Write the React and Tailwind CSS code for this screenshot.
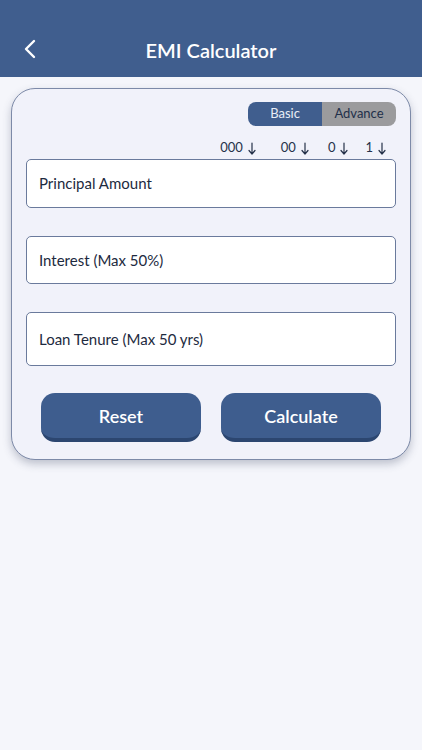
import React from "react";

function Arrow() {
  return (
    <svg width="8" height="13" viewBox="0 0 8 13" fill="none" className="ml-[5px]">
      <path d="M4 1 V12 M1 8.5 L4 12 L7 8.5" stroke="#26324a" strokeWidth="1.2" strokeLinecap="round" strokeLinejoin="round" />
    </svg>
  );
}

export default function App() {
  const font = { fontFamily: "Lato, 'Noto Sans', sans-serif" };
  return (
    <div className="w-[422px] h-[750px] bg-[#f5f6fb] overflow-hidden" style={font}>
      <header className="h-[77px] bg-[#405e8e] relative flex items-end">
        <div className="w-full h-[52px] flex items-center relative">
          <button className="absolute left-[20px] top-[12px] w-[20px] h-[24px] flex items-center justify-center">
            <svg width="14" height="20" viewBox="0 0 14 20" fill="none">
              <path d="M11 2 L3 10 L11 18" stroke="white" strokeWidth="2.4" strokeLinecap="round" strokeLinejoin="round" />
            </svg>
          </button>
          <h1 className="w-full text-center text-white text-[20px] font-semibold -mt-[3px]">EMI Calculator</h1>
        </div>
      </header>
      <div className="px-[11px] pt-[11px]">
        <div className="bg-[#f1f2fa] border border-[#7d8aa8] rounded-[24px] shadow-[0_4px_8px_rgba(60,70,100,0.3)] pt-[13px] pb-[17px] px-[14px]">
          <div className="flex justify-end">
            <div className="flex h-[24px] rounded-[8px] overflow-hidden text-[13px]">
              <div className="w-[74px] bg-[#405e8e] text-[#e8edf7] flex items-center justify-center">Basic</div>
              <div className="w-[74px] bg-[#9b9b9d] text-[#22304a] flex items-center justify-center">Advance</div>
            </div>
          </div>
          <div className="flex justify-end text-[13px] text-[#26324a] mt-[12px] h-[20px] items-center pr-[10px]">
            <span className="mr-[25px] flex items-center">000<Arrow /></span>
            <span className="mr-[19px] flex items-center">00<Arrow /></span>
            <span className="mr-[17px] flex items-center">0<Arrow /></span>
            <span className="flex items-center">1<Arrow /></span>
          </div>
          <div className="mt-[1px] flex flex-col gap-[28px]">
            <div className="h-[49px] bg-white border border-[#6a7a9c] rounded-[5px] flex items-center px-[12px] text-[15px] text-[#1d2a40]">Principal Amount</div>
            <div className="h-[48px] bg-white border border-[#6a7a9c] rounded-[5px] flex items-center px-[12px] text-[15px] text-[#1d2a40]">Interest (Max 50%)</div>
            <div className="h-[54px] bg-white border border-[#6a7a9c] rounded-[5px] flex items-center px-[12px] text-[15px] text-[#1d2a40]">Loan Tenure (Max 50 yrs)</div>
          </div>
          <div className="mt-[27px] flex justify-between px-[15px]">
            <button className="w-[160px] h-[49px] rounded-[14px] bg-[#3e5d8e] border-b-[4px] border-[#2c4670] text-white text-[18px] font-semibold flex items-center justify-center pt-[2px]">Reset</button>
            <button className="w-[160px] h-[49px] rounded-[14px] bg-[#3e5d8e] border-b-[4px] border-[#2c4670] text-white text-[18px] font-semibold flex items-center justify-center pt-[2px]">Calculate</button>
          </div>
        </div>
      </div>
    </div>
  );
}
